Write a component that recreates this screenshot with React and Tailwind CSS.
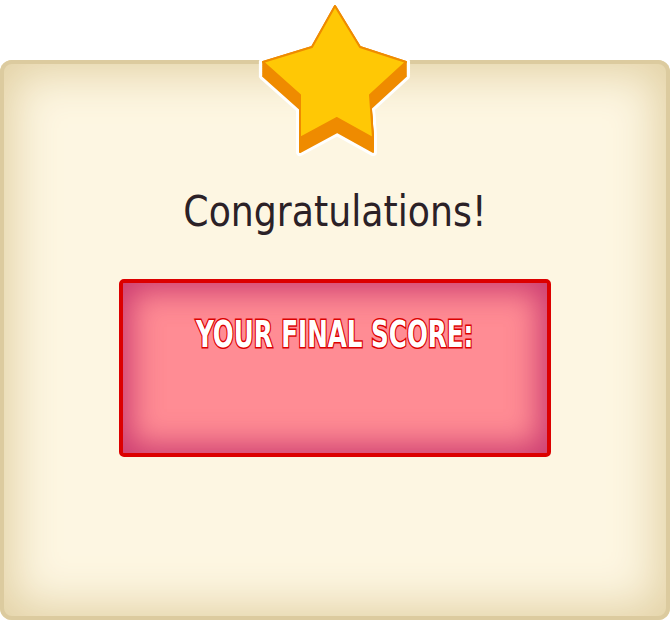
import React from 'react';

const STAR = '75,6 100,47 146,62 110,95 113,138 77,118 40,138 40,95 3,62 52,47';

function Star() {
  const offsets = [0, 2, 4, 6, 8, 10, 12, 14];
  return (
    <svg width="160" height="165" viewBox="-5 -3 160 165" className="block">
      {/* white outline */}
      {offsets.map(o => (
        <polygon key={'w' + o} points={STAR} transform={`translate(0 ${o})`} fill="#fff" stroke="#fff" strokeWidth="8" strokeLinejoin="round" />
      ))}
      {/* orange extrusion */}
      {offsets.map(o => (
        <polygon key={'o' + o} points={STAR} transform={`translate(0 ${o})`} fill="#ef8b00" stroke="#ef8b00" strokeWidth="2" strokeLinejoin="round" />
      ))}
      <polygon points={STAR} fill="#ffc805" stroke="#ef8b00" strokeWidth="2" strokeLinejoin="round" />
    </svg>
  );
}

export default function App() {
  return (
    <div className="relative w-[670px] h-[620px] pt-[60px] bg-white font-['DejaVu_Sans_Condensed','DejaVu_Sans',sans-serif]">
      <div className="absolute left-1/2 -translate-x-1/2 top-[-3px] z-10">
        <Star />
      </div>

      <div className="h-[560px] rounded-[12px] bg-[#fdf6e2] shadow-[inset_0_0_0_4px_#dccb9f,inset_0_0_45px_14px_#e3d2a6] flex flex-col items-center pt-[131px]">
        <h1 className="text-[42px] leading-none text-[#2b2127] scale-x-[0.96]">Congratulations!</h1>

        <div className="mt-[46px] w-[432px] h-[178px] rounded-[5px] border-4 border-[#dc0000] bg-[#ff8c94] shadow-[inset_0_0_30px_8px_rgba(190,40,104,0.8)] flex justify-center pt-[32px]">
          <span className="inline-block h-fit text-[38px] leading-none font-bold text-white scale-x-[0.72] [-webkit-text-stroke:3px_#dc0000] [paint-order:stroke_fill]">
            YOUR FINAL SCORE:
          </span>
        </div>
      </div>
    </div>
  );
}
